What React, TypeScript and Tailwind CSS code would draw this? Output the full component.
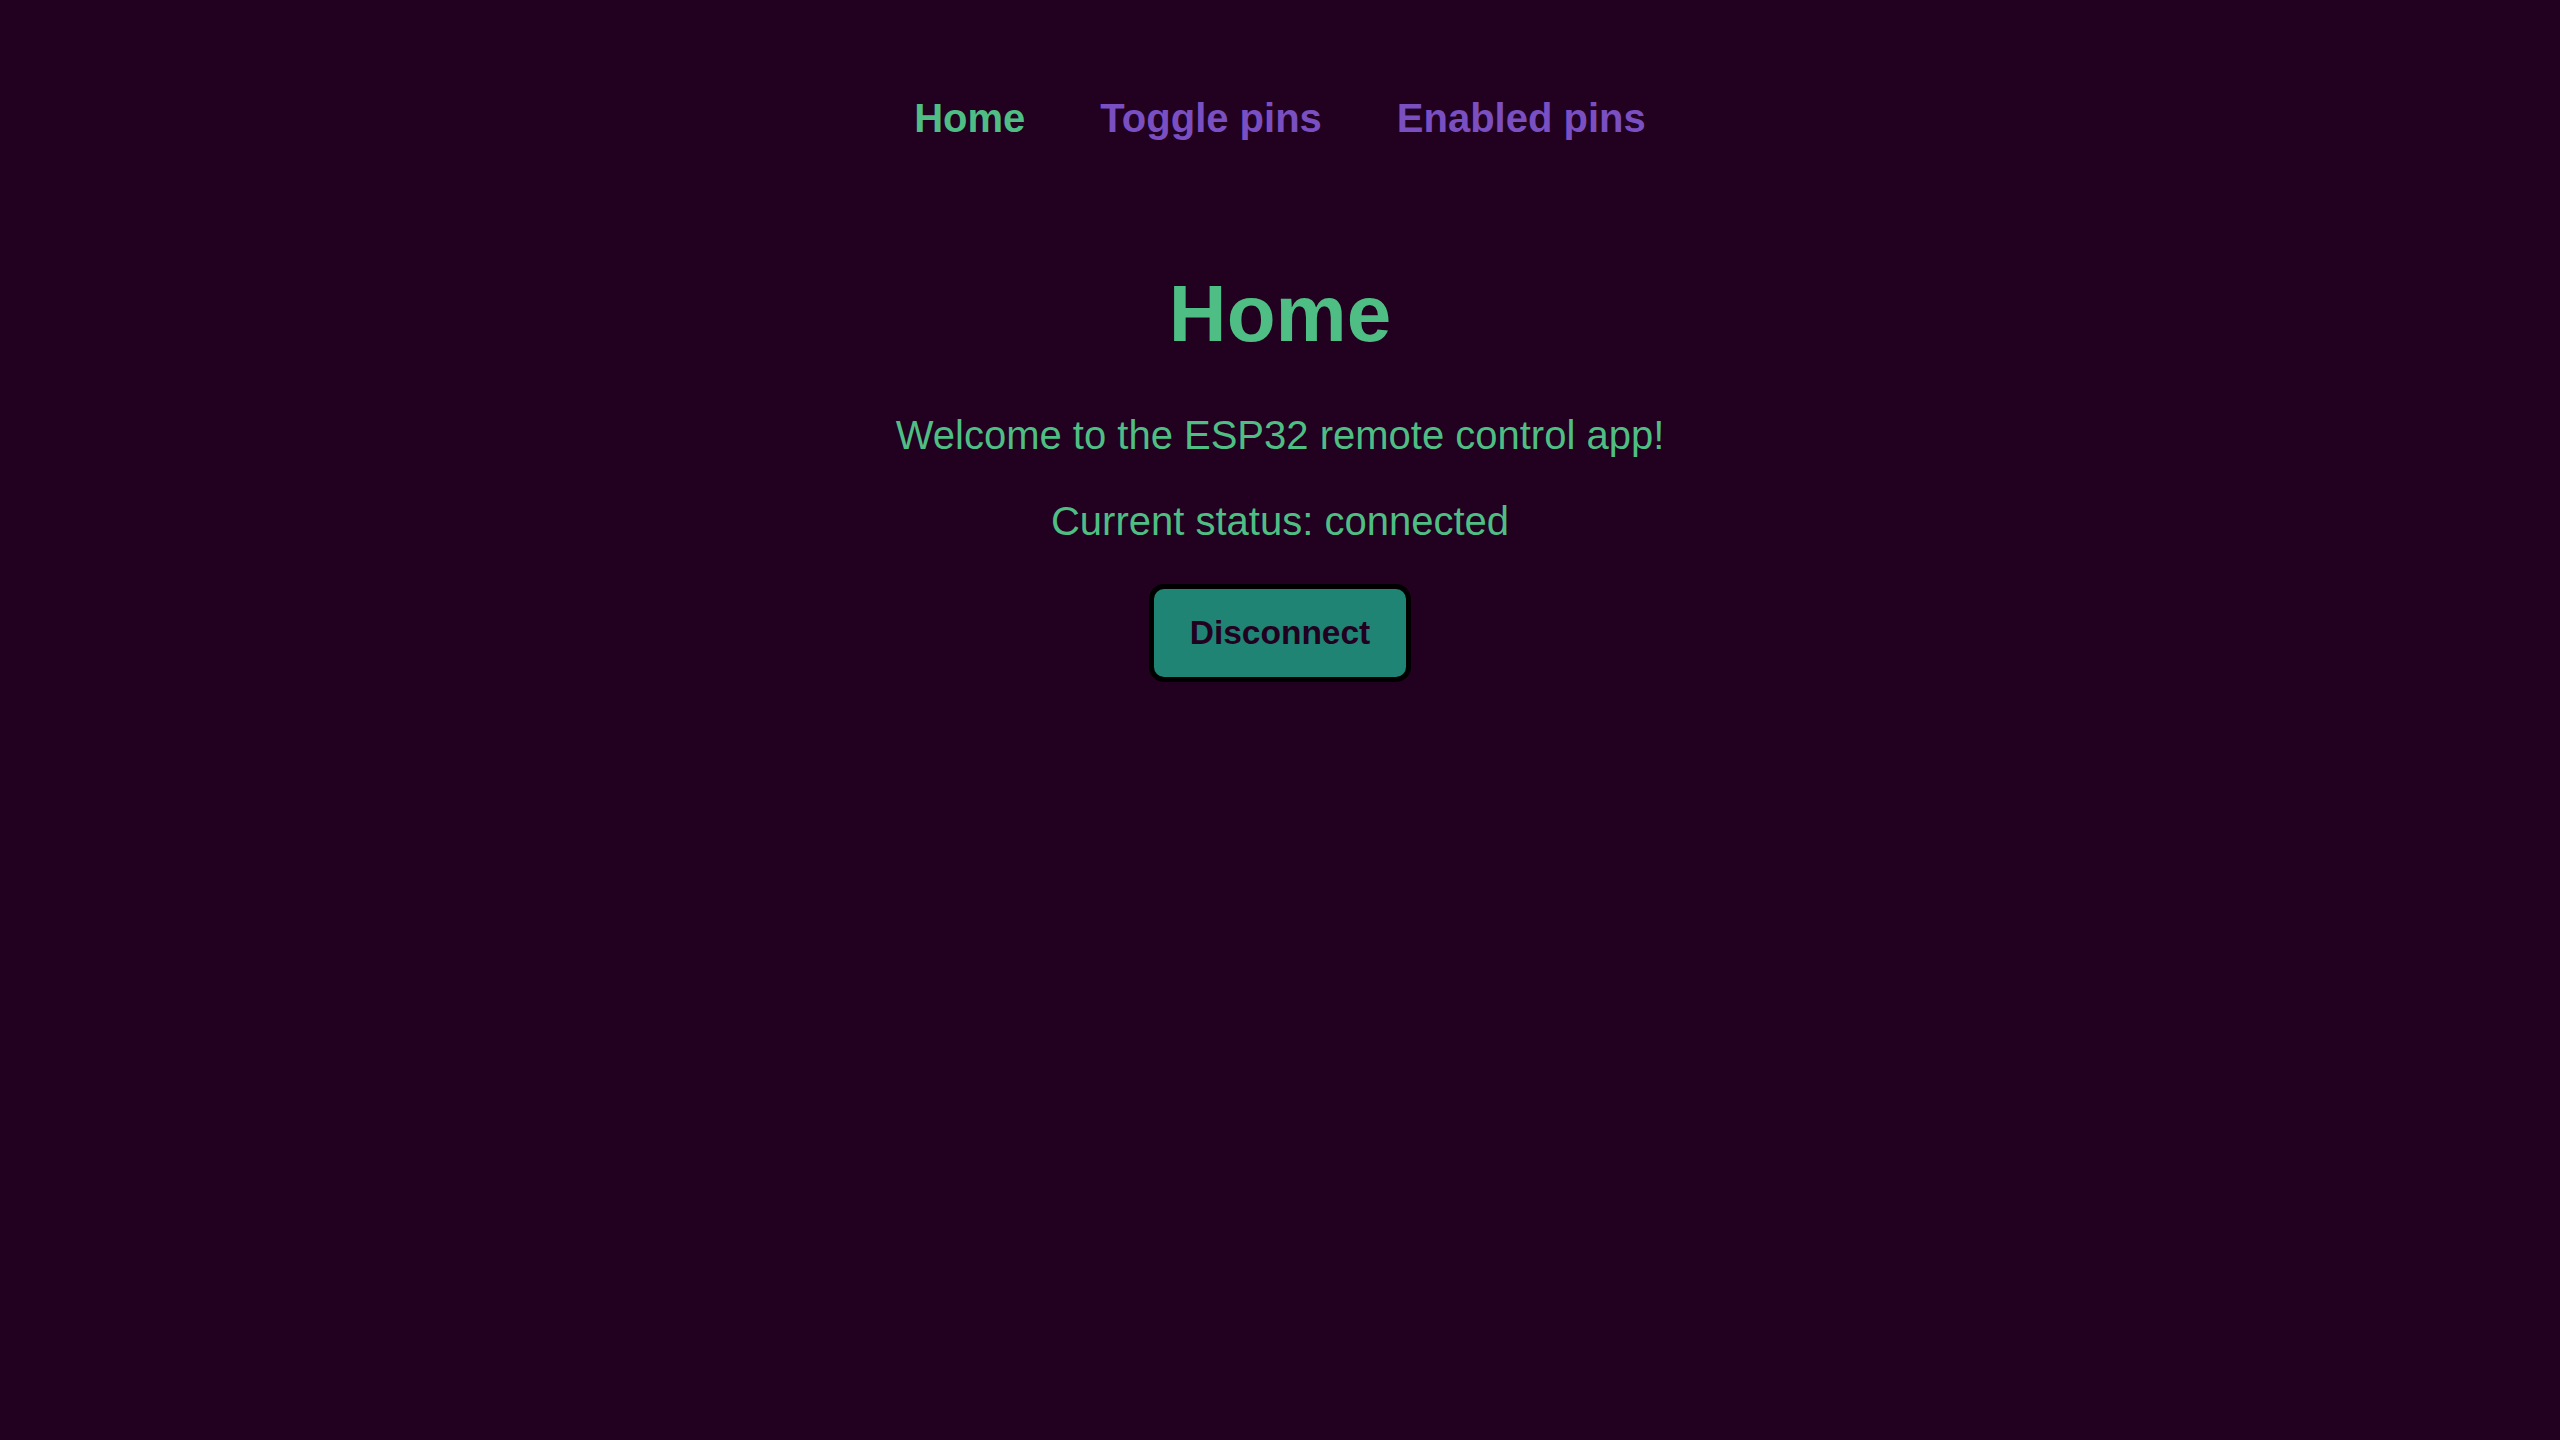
export default function App() {
  return (
    <div
      className="min-h-screen w-full bg-[#22001f] flex flex-col items-center"
      style={{ fontFamily: '"Liberation Sans", Arial, sans-serif' }}
    >
      {/* Navigation */}
      <nav className="pt-[94px] flex items-center gap-[75px]">
        <a className="text-[40px] leading-[48px] font-bold text-[#4ebe84]">Home</a>
        <a className="text-[40px] leading-[48px] font-bold text-[#7a4fc1]">Toggle pins</a>
        <a className="text-[40px] leading-[48px] font-bold text-[#7a4fc1]">Enabled pins</a>
      </nav>

      {/* Main */}
      <main className="mt-[124px] flex flex-col items-center">
        <h1 className="text-[80px] leading-[96px] font-bold text-[#4ebe84]">Home</h1>
        <p className="mt-[49px] text-[40px] leading-[48px] text-[#4ebe84]">
          Welcome to the ESP32 remote control app!
        </p>
        <p className="mt-[38px] text-[40px] leading-[48px] text-[#4ebe84]">
          Current status: connected
        </p>
        <button className="mt-[39px] w-[262px] h-[98px] flex items-center justify-center rounded-[15px] border-[5px] border-black bg-[#1f8474] text-[33.5px] font-bold text-[#22001f]">
          Disconnect
        </button>
      </main>
    </div>
  );
}
